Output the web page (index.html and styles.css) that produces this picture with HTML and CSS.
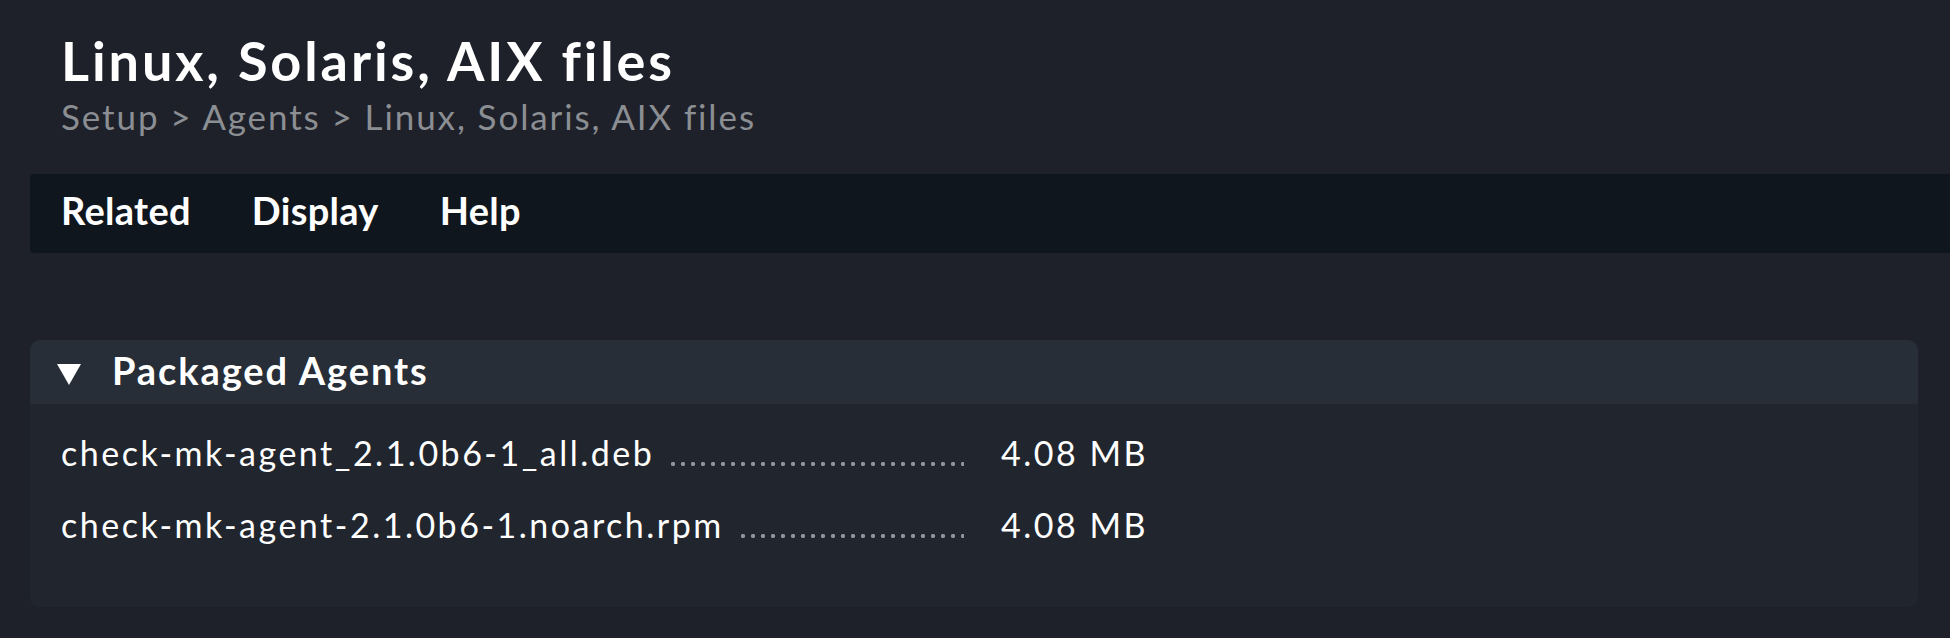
FILE: index.html
```html
<!DOCTYPE html>
<html>
<head>
<meta charset="utf-8">
<link rel="stylesheet" href="styles.css">
</head>
<body>
<header class="page-head">
  <h1 class="title">Linux, Solaris, AIX files</h1>
  <div class="breadcrumb">Setup &gt; Agents &gt; Linux, Solaris, AIX files</div>
</header>
<nav class="menubar">
  <span class="menu-item">Related</span>
  <span class="menu-item">Display</span>
  <span class="menu-item">Help</span>
</nav>
<section class="box">
  <div class="box-head">
    <svg class="toggle" width="24" height="21" viewBox="0 0 24 21"><polygon points="0,0 24,0 12,21" fill="#ffffff"/></svg>
    <span class="box-title">Packaged Agents</span>
  </div>
  <div class="box-body">
    <div class="file-row">
      <div class="file-cell"><span class="file-name">check-mk-agent_2.1.0b6-1_all.deb</span><span class="leader"></span></div>
      <span class="file-size">4.08 MB</span>
    </div>
    <div class="file-row">
      <div class="file-cell"><span class="file-name">check-mk-agent-2.1.0b6-1.noarch.rpm</span><span class="leader"></span></div>
      <span class="file-size">4.08 MB</span>
    </div>
  </div>
</section>
</body>
</html>
```
FILE: styles.css
```css
html, body {
  margin: 0;
  padding: 0;
  background: #1e2129;
  font-family: Lato, "Open Sans", sans-serif;
  color: #ffffff;
}
body {
  width: 1950px;
  height: 638px;
  overflow: hidden;
}
.page-head {
  padding: 31px 0 0 61px;
}
.title {
  margin: 0;
  font-size: 54px;
  font-weight: 700;
  line-height: 60px;
  letter-spacing: 2.9px;
}
.breadcrumb {
  font-size: 35px;
  line-height: 50px;
  letter-spacing: 1.9px;
  color: #8b8e93;
}
.menubar {
  box-sizing: border-box;
  margin: 33px 0 0 30px;
  height: 79px;
  padding: 13px 0 0 31px;
  background: #10161d;
  border-radius: 4px 0 0 4px;
  display: flex;
  align-items: flex-start;
  gap: 61px;
}
.menu-item {
  font-size: 38px;
  line-height: 46px;
  font-weight: 700;
  letter-spacing: 0.3px;
}
.box {
  margin: 87px 0 0 30px;
  width: 1888px;
  height: 267px;
  background: #21262e;
  border-radius: 10px;
  overflow: hidden;
}
.box-head {
  box-sizing: border-box;
  height: 64px;
  background: #272e38;
  display: flex;
  align-items: flex-start;
  padding: 7px 0 0 27px;
}
.toggle {
  display: block;
  margin: 17px 31px 0 0;
}
.box-title {
  font-size: 38px;
  line-height: 46px;
  font-weight: 700;
  letter-spacing: 1.9px;
}
.box-body {
  padding: 29px 0 0 31px;
  display: flex;
  flex-direction: column;
  gap: 32px;
}
.file-row {
  display: flex;
  font-size: 34px;
  line-height: 40px;
  letter-spacing: 2.5px;
}
.file-cell {
  width: 903px;
  display: flex;
}
.leader {
  flex: 1;
  margin-left: 14px;
  background-image: radial-gradient(circle, #8d949c 1.9px, transparent 2.4px);
  background-size: 10px 10px;
  background-repeat: repeat-x;
  background-position: 0 26px;
}
.file-size {
  margin-left: 37px;
}
```
